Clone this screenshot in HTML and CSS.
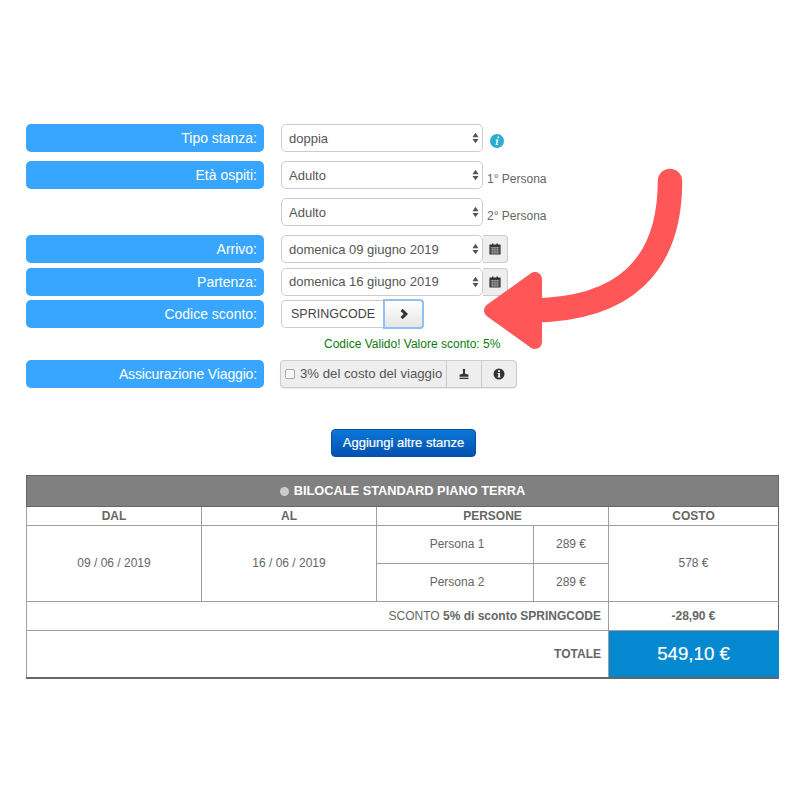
FILE: index.html
```html
<!DOCTYPE html>
<html lang="it">
<head>
<meta charset="utf-8">
<title>Prenotazione</title>
<link rel="stylesheet" href="styles.css">
</head>
<body>
<main class="page">
  <form class="form">
    <div class="row">
      <label class="lab">Tipo stanza:</label>
      <div class="sel"><span>doppia</span><svg class="updown" viewBox="0 0 8 14"><path d="M4 1 7.500 6H.5zM4 13 .5 8h7z"/></svg></div>
      <svg class="info" viewBox="0 0 14 14"><circle cx="7" cy="7" r="7" fill="#2aaed0"/><path d="M7.700 2.600h1.700l-.4 1.600H7.300zM6 5.600h2.500L7.300 10h1l-.3 1H5.500l1.200-4.400h-1z" fill="#fff"/></svg>
    </div>
    <div class="row">
      <label class="lab">Età ospiti:</label>
      <div class="sel"><span>Adulto</span><svg class="updown" viewBox="0 0 8 14"><path d="M4 1 7.500 6H.5zM4 13 .5 8h7z"/></svg></div>
      <span class="note">1° Persona</span>
    </div>
    <div class="row">
      <span class="lab blank"></span>
      <div class="sel"><span>Adulto</span><svg class="updown" viewBox="0 0 8 14"><path d="M4 1 7.500 6H.5zM4 13 .5 8h7z"/></svg></div>
      <span class="note">2° Persona</span>
    </div>
    <div class="row tight">
      <label class="lab">Arrivo:</label>
      <div class="sel"><span>domenica 09 giugno 2019</span><svg class="updown" viewBox="0 0 8 14"><path d="M4 1 7.500 6H.5zM4 13 .5 8h7z"/></svg></div>
      <div class="addon"><svg class="cal" viewBox="0 0 12 12"><path d="M1 1.500h2V.5h1.500v1h3V.5H9v1h2a.6.6 0 0 1 .6.6V11a.6.6 0 0 1-.6.6H1a.6.6 0 0 1-.6-.6V2.100A.6.6 0 0 1 1 1.500z" fill="#333"/><path d="M1.500 4.400h9M1.500 6.200h9M1.500 8h9M1.500 9.800h9M3.300 4v7M5.100 4v7M6.900 4v7M8.700 4v7" stroke="#eee" stroke-width=".4"/></svg></div>
    </div>
    <div class="row tight">
      <label class="lab">Partenza:</label>
      <div class="sel"><span>domenica 16 giugno 2019</span><svg class="updown" viewBox="0 0 8 14"><path d="M4 1 7.500 6H.5zM4 13 .5 8h7z"/></svg></div>
      <div class="addon"><svg class="cal" viewBox="0 0 12 12"><path d="M1 1.500h2V.5h1.500v1h3V.5H9v1h2a.6.6 0 0 1 .6.6V11a.6.6 0 0 1-.6.6H1a.6.6 0 0 1-.6-.6V2.100A.6.6 0 0 1 1 1.500z" fill="#333"/><path d="M1.500 4.400h9M1.500 6.200h9M1.500 8h9M1.500 9.800h9M3.300 4v7M5.100 4v7M6.900 4v7M8.700 4v7" stroke="#eee" stroke-width=".4"/></svg></div>
    </div>
    <div class="row tight">
      <label class="lab">Codice sconto:</label>
      <div class="code">SPRINGCODE</div>
      <button type="button" class="go"><svg viewBox="0 0 8 10"><path d="M2 1.500 5.500 5 2 8.500" fill="none" stroke="#333" stroke-width="2.600"/></svg></button>
    </div>
    <p class="valid">Codice Valido! Valore sconto: 5%</p>
    <div class="row">
      <label class="lab lab-long">Assicurazione Viaggio:</label>
      <div class="ins">
        <span class="ins-text"><span class="check"></span>3% del costo del viaggio</span>
        <span class="ins-btn"><svg viewBox="0 0 12 12"><path d="M4.800 1h2.400l-.3 4.500 3.600 1.200v2H1.500v-2l3.600-1.200zM1.500 9.700h9V11h-9z" fill="#333"/></svg></span>
        <span class="ins-btn"><svg viewBox="0 0 12 12"><circle cx="6" cy="6" r="5.500" fill="#333"/><path d="M5 2.300h2v1.700H5zM4.600 5h2.400v3.600h.6v1H4.600v-1h.6V6h-.6z" fill="#eee"/></svg></span>
      </div>
    </div>
  </form>

  <div class="add-wrap"><button type="button" class="add">Aggiungi altre stanze</button></div>

  <table class="summary">
    <colgroup>
      <col class="c1"><col class="c2"><col class="c3"><col class="c4"><col class="c5">
    </colgroup>
    <tr class="title"><th colspan="5"><span class="dot"></span>BILOCALE STANDARD PIANO TERRA</th></tr>
    <tr class="head"><th>DAL</th><th>AL</th><th colspan="2">PERSONE</th><th>COSTO</th></tr>
    <tr class="pers"><td rowspan="2">09 / 06 / 2019</td><td rowspan="2">16 / 06 / 2019</td><td class="who">Persona 1</td><td>289 €</td><td rowspan="2">578 €</td></tr>
    <tr class="pers"><td class="who">Persona 2</td><td>289 €</td></tr>
    <tr class="disc"><td colspan="4" class="right">SCONTO <b>5% di sconto SPRINGCODE</b></td><td><b>-28,90 €</b></td></tr>
    <tr class="tot"><td colspan="4" class="right"><b>TOTALE</b></td><td class="amount">549,10 €</td></tr>
  </table>
</main>

<svg class="arrow" viewBox="0 0 800 800" aria-hidden="true">
  <path d="M670 181C670 265 625 310 530 310.500" fill="none" stroke="#ff5757" stroke-width="24.500" stroke-linecap="round"/>
  <path d="M491 310.500 535 279V342z" fill="#ff5757" stroke="#ff5757" stroke-width="14" stroke-linejoin="round"/>
</svg>
</body>
</html>
```
FILE: styles.css
```css
* { box-sizing: border-box; }
html, body { margin: 0; padding: 0; background: #fff; }
body {
  position: relative;
  width: 800px;
  height: 800px;
  overflow: hidden;
  font-family: "Liberation Sans", Arial, sans-serif;
  color: #555;
}
.page { padding: 124px 21px 0 26px; }
.form { display: flex; flex-direction: column; }
.row { display: flex; align-items: stretch; height: 28px; margin-bottom: 9px; }
.row.tight { margin-bottom: 4.500px; }
.lab {
  flex: 0 0 238px;
  margin-right: 17px;
  padding-right: 7px;
  border-radius: 5px;
  background: #38a6ff;
  color: #fff;
  font-size: 14px;
  line-height: 29px;
  text-align: right;
}
.lab-long { letter-spacing: -.15px; }
.lab.blank { background: transparent; }
.sel {
  flex: 0 0 202px;
  display: flex;
  align-items: center;
  justify-content: space-between;
  padding: 0 3px 0 7px;
  border: 1px solid #ccc;
  border-radius: 5px;
  background: #fff;
  color: #555;
  font-size: 13px;
}
.updown { width: 7px; height: 14px; fill: #555; }
.info { width: 14px; height: 14px; margin: 10px 0 0 7px; }
.note { margin-left: 4px; padding-top: 11px; font-size: 12px; line-height: 14px; color: #666; }
.addon {
  flex: 0 0 25px;
  display: flex;
  align-items: center;
  justify-content: center;
  border: 1px solid #ccc;
  border-left: 0;
  border-radius: 0 4px 4px 0;
  background: #eee;
}
.cal { width: 12px; height: 12px; }
.code {
  flex: 0 0 103px;
  padding-left: 9px;
  border: 1px solid #ccc;
  border-right: 0;
  border-radius: 5px 0 0 5px;
  font-size: 12.500px;
  line-height: 26px;
  color: #444;
}
.go {
  flex: 0 0 39px;
  display: flex;
  align-items: center;
  justify-content: center;
  height: 28px;
  padding: 0;
  border: 1px solid #a9c9ea;
  border-radius: 0 3px 3px 0;
  outline: 2px solid #8fc0f0;
  outline-offset: -1px;
  background: linear-gradient(#fff, #e6e6e6);
}
.go svg { width: 10px; height: 12px; }
.valid {
  margin: 3px 0 0;
  height: 24px;
  padding-left: 298px;
  font-size: 12px;
  line-height: 16px;
  color: #0e7a0e;
}
.ins {
  display: flex;
  height: 28px;
  margin-left: -1px;
  border: 1px solid #ccc;
  border-radius: 4px;
  background: #eee;
  box-shadow: 0 1px 1px rgba(0, 0, 0, .08);
  font-size: 13.200px;
}
.ins-text { display: flex; align-items: center; width: 165px; padding-left: 4px; color: #555; white-space: nowrap; }
.check {
  width: 10px;
  height: 10px;
  margin-right: 5px;
  border: 1px solid #aaa;
  border-radius: 2px;
  background: #f6f6f6;
}
.ins-btn {
  display: flex;
  align-items: center;
  justify-content: center;
  width: 35px;
  border-left: 1px solid #ccc;
}
.ins-btn svg { width: 12px; height: 12px; }
.add-wrap { display: flex; justify-content: center; margin: 32px 0 18px 2px; }
.add {
  width: 145px;
  height: 28px;
  padding: 0;
  border: 1px solid #0a4fa0;
  border-radius: 4px;
  background: linear-gradient(#0a78d8, #0550b0);
  color: #fff;
  font: 13px "Liberation Sans", Arial, sans-serif;
  -webkit-text-stroke: .2px #fff;
}
.summary {
  width: 752px;
  height: 204px;
  border-collapse: collapse;
  table-layout: fixed;
  border: 1px solid #666;
  border-bottom-width: 2px;
  font-size: 12px;
  color: #666;
}
.c1, .c2 { width: 175px; }
.c3 { width: 157px; }
.c4 { width: 75px; }
.c5 { width: 170px; }
.summary th, .summary td { padding: 0; border: 1px solid #9e9e9e; text-align: center; font-weight: normal; }
.summary tr > :last-child { border-right-color: #666; }
.title th {
  height: 31px;
  border: 1px solid #666;
  background: #808080;
  color: #fff;
  font-size: 12.800px;
  font-weight: bold;
}
.dot {
  display: inline-block;
  width: 9px;
  height: 9px;
  margin-right: 5px;
  border-radius: 50%;
  background: #ccc;
  vertical-align: -1px;
}
.head th { height: 19px; font-weight: bold; color: #666; }
.pers td { height: 38px; }
.summary td.who { padding-left: 4px; }
.disc td { height: 29px; }
.tot td { height: 47px; }
.summary td.right { padding-right: 7px; text-align: right; }
.summary td.amount {
  padding-top: 1px;
  background: #0488cf;
  color: #fff;
  font-size: 18.700px;
  border-color: #0488cf;
  -webkit-text-stroke: .2px #fff;
}
.arrow { position: absolute; left: 0; top: 0; width: 800px; height: 800px; pointer-events: none; }
```
